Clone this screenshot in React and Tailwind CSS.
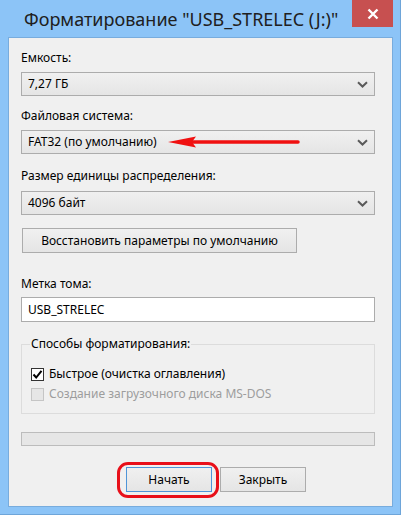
import React from 'react';

const Label = ({ children, className = '' }) => (
  <div className={`h-[16px] leading-[16px] text-[12px] text-black ${className}`}>{children}</div>
);

const Chevron = () => (
  <svg width="11" height="7" viewBox="0 0 11 7" className="shrink-0">
    <path d="M1 1.2 L5.5 5.5 L10 1.2" fill="none" stroke="#5a5a5a" strokeWidth="2" />
  </svg>
);

const Combo = ({ value, children }) => (
  <div className="relative w-[354px] h-[24px] border border-[#acacac] bg-gradient-to-b from-[#f0f0f0] to-[#e5e5e5] flex items-center justify-between pl-[6px] pr-[6px] text-[12px] text-black">
    <span>{value}</span>
    <Chevron />
    {children}
  </div>
);

const Btn = ({ children, className = '' }) => (
  <div
    className={`h-[25px] border bg-gradient-to-b from-[#f0f0f0] to-[#e5e5e5] flex items-center justify-center text-[12px] text-black ${className}`}
  >
    {children}
  </div>
);

export default function App() {
  return (
    <div className="w-[401px] h-[515px] bg-[#8cc4f7] border-r border-b border-[#6ea5d9] flex flex-col font-['Noto_Sans',sans-serif]">
      <div className="h-[37px] flex items-start justify-between pr-[7px]">
        <div className="pl-[24px] pt-[6px] text-[18px] leading-[26px] text-[#202020] whitespace-nowrap">
          Форматирование "USB_STRELEC (J:)"
        </div>
        <div className="w-[41px] h-[27px] bg-[#c75050] flex items-center justify-center">
          <svg width="12" height="12" viewBox="0 0 12 12">
            <path d="M1.5 1.5 L10.5 10.5 M10.5 1.5 L1.5 10.5" stroke="#fff" strokeWidth="2.4" />
          </svg>
        </div>
      </div>

      <div className="ml-[8px] mr-[7px] h-[470px] bg-[#f0f0f0] border border-[#78acdd] pl-[12px] flex flex-col">
        <Label className="mt-[12px]">Емкость:</Label>
        <div className="mt-[6px]">
          <Combo value="7,27 ГБ" />
        </div>

        <Label className="mt-[12px]">Файловая система:</Label>
        <div className="mt-[6px]">
          <Combo value="FAT32 (по умолчанию)">
            <svg
              width="132"
              height="12"
              viewBox="0 0 132 12"
              className="absolute left-[146px] top-[5px]"
            >
              <path d="M0 6 L28 0.5 L24 6 L28 11.5 Z" fill="#f01010" />
              <path d="M22 6 L130 6" stroke="#f01010" strokeWidth="3.5" strokeLinecap="round" />
            </svg>
          </Combo>
        </div>

        <Label className="mt-[14px]">Размер единицы распределения:</Label>
        <div className="mt-[7px]">
          <Combo value="4096 байт" />
        </div>

        <Btn className="mt-[13px] ml-[1px] w-[275px] border-[#acacac]">Восстановить параметры по умолчанию</Btn>

        <Label className="mt-[23px]">Метка тома:</Label>
        <div className="mt-[5px] w-[354px] h-[25px] bg-white border border-[#acacac] flex items-center pl-[6px] text-[12px] text-black">
          USB_STRELEC
        </div>

        <fieldset className="mt-[14px] w-[354px] h-[78px] border border-[#dcdcdc] px-[9px] m-0">
          <legend className="ml-[-1px] px-[1px] text-[12px] leading-[16px] text-black">
            Способы форматирования:
          </legend>
          <div className="mt-[14px] flex items-center gap-[5px] h-[16px]">
            <div className="w-[13px] h-[13px] border border-[#333] bg-white flex items-center justify-center">
              <svg width="11" height="11" viewBox="0 0 11 11">
                <path d="M1.5 5.5 L4.2 8.5 L9.5 1.8" fill="none" stroke="#000" strokeWidth="2" />
              </svg>
            </div>
            <span className="text-[12px] text-black">Быстрое (очистка оглавления)</span>
          </div>
          <div className="mt-[4px] flex items-center gap-[5px] h-[16px]">
            <div className="w-[13px] h-[13px] border border-[#c5c5c5] bg-[#e6e6e6]" />
            <span className="text-[12px] text-[#9d9d9d]">Создание загрузочного диска MS-DOS</span>
          </div>
        </fieldset>

        <div className="mt-[18px] w-[354px] h-[14px] bg-[#e6e6e6] border border-[#bcbcbc]" />

        <div className="mt-[21px] flex gap-[8px] ml-[105px]">
          <div className="relative">
            <Btn className="w-[86px] border-[#4f95d8]">Начать</Btn>
            <div className="absolute left-[-9px] right-[-7px] top-[-5px] bottom-[-6px] border-[3px] border-[#e8101a] rounded-[11px]" />
          </div>
          <Btn className="w-[86px] border-[#acacac]">Закрыть</Btn>
        </div>
      </div>
    </div>
  );
}
